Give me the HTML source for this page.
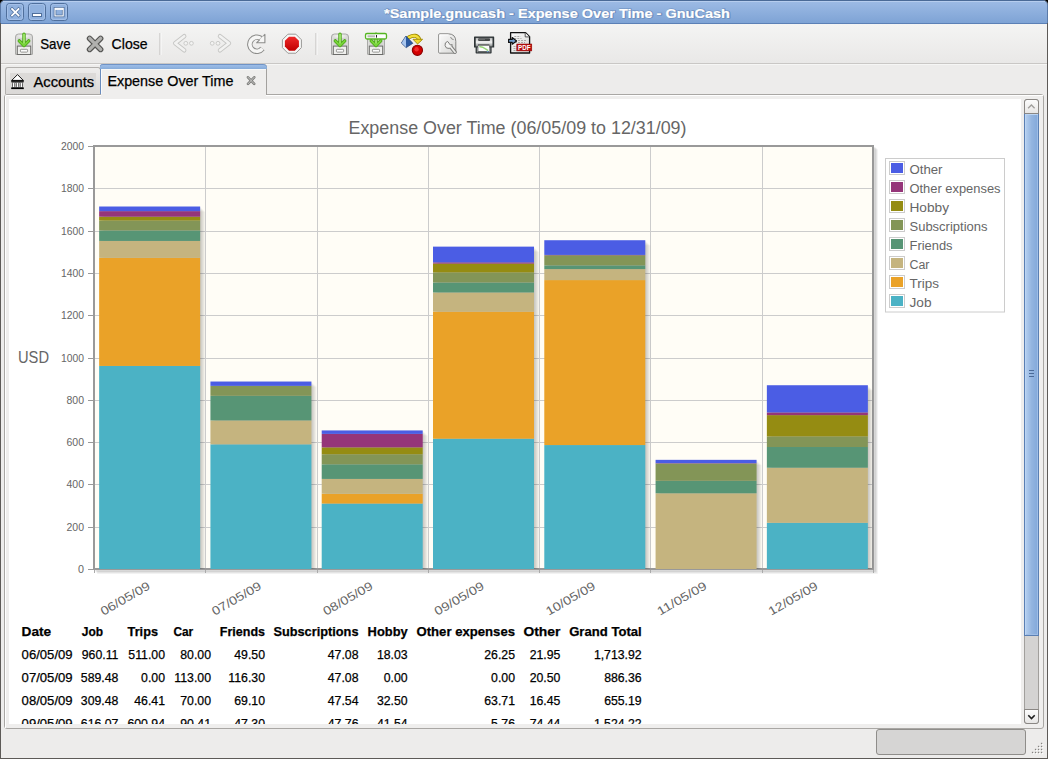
<!DOCTYPE html>
<html><head><meta charset="utf-8">
<style>
html,body{margin:0;padding:0;}
body{width:1048px;height:759px;position:relative;overflow:hidden;background:#edeceb;font-family:"Liberation Sans", sans-serif;}
.abs{position:absolute;}
svg text{font-family:"Liberation Sans", sans-serif;}
</style></head><body>
<div class="abs" style="left:0;top:0;width:1048px;height:24px;background:linear-gradient(#9dbbe5,#7ea3d5);border-top:1px solid #4a6a97;box-sizing:border-box;border-bottom:1px solid #5b80b6;border-left:1px solid #5a7aa8;border-right:1px solid #5a7aa8;border-radius:5px 5px 0 0;"></div>
<div class="abs" style="left:3px;top:1px;width:1042px;height:1px;background:#b6cdee;"></div>
<div class="abs" style="left:1px;top:24px;width:1046px;height:39px;background:linear-gradient(#f4f4f3,#e9e8e7);"></div>
<div class="abs" style="left:1px;top:63px;width:1046px;height:1px;background:#c9c7c5;"></div>
<div class="abs" style="left:1px;top:64px;width:1046px;height:1px;background:#f6f6f5;"></div>
<div class="abs" style="left:0;top:23px;width:1px;height:736px;background:#5d5a57;"></div>
<div class="abs" style="left:1047px;top:23px;width:1px;height:736px;background:#5d5a57;"></div>
<div class="abs" style="left:0;top:758px;width:1048px;height:1px;background:#5d5a57;"></div>
<div class="abs" style="left:4px;top:94px;width:1040px;height:635px;box-sizing:border-box;border:1px solid #a9a7a4;border-radius:3px;background:#efeeed;"></div>
<div class="abs" style="left:5px;top:95px;width:1038px;height:633px;box-sizing:border-box;border-top:1px solid #fff;border-left:1px solid #fff;border-radius:2px 0 0 0;"></div>
<div class="abs" style="left:9px;top:99px;width:1012px;height:625px;background:#fff;"></div>
<div class="abs" style="left:1024px;top:99px;width:15px;height:625px;background:#d4d3d2;box-sizing:border-box;border:1px solid #a19f9c;border-radius:3px;"></div>
<div class="abs" style="left:1024px;top:113px;width:15px;height:523px;background:linear-gradient(90deg,#b7d1f1,#94b5e0 50%,#82a8da);box-sizing:border-box;border:1px solid #5a7fb3;box-shadow:inset 1px 1px 0 #bcd5f3, inset -1px -1px 0 #9ebde6;"></div>
<div class="abs" style="left:1029px;top:370px;width:5px;height:1px;background:#4a6a98;box-shadow:0 3px 0 #4a6a98, 0 6px 0 #4a6a98;"></div>
<div class="abs" style="left:1024px;top:99px;width:15px;height:15px;background:linear-gradient(#fcfcfc,#e7e6e5);box-sizing:border-box;border:1px solid #8a8784;border-radius:3px 3px 0 0;"></div>
<div class="abs" style="left:1024px;top:709px;width:15px;height:15px;background:linear-gradient(#fcfcfc,#e7e6e5);box-sizing:border-box;border:1px solid #8a8784;border-radius:0 0 3px 3px;"></div>
<div class="abs" style="left:876px;top:729px;width:150px;height:26px;background:#d6d5d4;box-sizing:border-box;border:1px solid #8f8d8a;border-radius:3px;"></div>
<div class="abs" style="left:5px;top:67px;width:96px;height:27px;box-sizing:border-box;border:1px solid #b3b1ae;border-bottom:none;border-radius:3px 3px 0 0;background:linear-gradient(#eeedec,#dad8d6);"></div>
<div class="abs" style="left:10px;top:73px;width:86px;height:18px;background:#dcdad8;"></div>
<div class="abs" style="left:100px;top:64px;width:167px;height:30px;box-sizing:border-box;border-left:1px solid #6a8cbd;border-right:1px solid #a3a19e;border-radius:3px 4px 0 0;background:#efeeed;"></div><div class="abs" style="left:101px;top:69px;width:1px;height:25px;background:#fafafa;"></div><div class="abs" style="left:101px;top:94px;width:165px;height:5px;background:#efeeed;"></div><div class="abs" style="left:266px;top:94px;width:1px;height:1px;background:#a3a19e;"></div>
<div class="abs" style="left:100px;top:64px;width:167px;height:5px;background:linear-gradient(#9dbde8,#86abd9);border-radius:3px 4px 0 0;border-top:1px solid #6f93c6;box-sizing:border-box;"></div><div class="abs" style="left:101px;top:69px;width:165px;height:1px;background:#f8f8f7;"></div>
<svg class="abs" style="left:0;top:0" width="1048" height="759">
<defs>
<linearGradient id="cabG" x1="0" y1="0" x2="1" y2="0"><stop offset="0" stop-color="#d9d9d7"/><stop offset="0.5" stop-color="#f7f7f6"/><stop offset="1" stop-color="#d4d4d2"/></linearGradient>
<linearGradient id="redG" x1="0" y1="0" x2="0" y2="1"><stop offset="0" stop-color="#ef2929"/><stop offset="1" stop-color="#c00000"/></linearGradient>
<linearGradient id="prG" x1="0" y1="0" x2="0" y2="1"><stop offset="0" stop-color="#b4b6b6"/><stop offset="0.5" stop-color="#f4f4f4"/><stop offset="0.72" stop-color="#c6c8c8"/><stop offset="1" stop-color="#7e8282"/></linearGradient>
<linearGradient id="pageG" x1="0" y1="0" x2="1" y2="1"><stop offset="0" stop-color="#fbfbfb"/><stop offset="1" stop-color="#d8d8d6"/></linearGradient>
</defs>
<g transform="translate(15,33.5)">
<path d="M0.5,3.5 Q0.5,0.5 3.5,0.5 L14.5,0.5 Q17.5,0.5 17.5,3.5 L17.5,20.8 L0.5,20.8 Z" fill="url(#cabG)" stroke="#a9a9a7" stroke-width="1"/>
<rect x="2.3" y="4.2" width="13.4" height="8.2" fill="#d3d3d1"/>
<rect x="2.3" y="12.6" width="13.4" height="8.4" fill="#efefed" stroke="#6c6c6a" stroke-width="1"/>
<rect x="5.4" y="15.8" width="7.2" height="2.8" rx="0.8" fill="#fbfbfb" stroke="#8a8a88" stroke-width="0.9"/>
<path d="M9,0.6 L9,10 M4.3,7.4 L9,12 L13.7,7.4" fill="none" stroke="#48a514" stroke-width="3.4" stroke-linecap="round" stroke-linejoin="round"/>
<path d="M9,0.6 L9,10 M4.3,7.4 L9,12 L13.7,7.4" fill="none" stroke="#78d33a" stroke-width="1.9" stroke-linecap="round" stroke-linejoin="round"/>
<path d="M9,1 L9,9.5" fill="none" stroke="#d2f7b0" stroke-width="0.8" stroke-linecap="round"/>
</g>
<path d="M89.6,38.4 L100.6,49.4 M100.6,38.4 L89.6,49.4" stroke="#545452" stroke-width="5.6" stroke-linecap="round"/>
<path d="M89.6,38.4 L100.6,49.4 M100.6,38.4 L89.6,49.4" stroke="#b0b0ae" stroke-width="3.4" stroke-linecap="round"/>
<rect x="159.5" y="33" width="1" height="22" fill="#bdbbb9"/><rect x="160.5" y="33" width="1" height="22" fill="#fbfbfb"/>
<path d="M184.2,36.2 L175.2,43.2 L184.2,50.3" fill="none" stroke="#c6c6c4" stroke-width="4.4" stroke-linecap="round" stroke-linejoin="round"/>
<path d="M184.2,36.2 L175.2,43.2 L184.2,50.3" fill="none" stroke="#f2f2f1" stroke-width="2.6" stroke-linecap="round" stroke-linejoin="round"/>
<circle cx="185.8" cy="43.3" r="1.9" fill="#f3f3f2" stroke="#c6c6c4" stroke-width="0.9"/>
<circle cx="191.4" cy="43.3" r="1.9" fill="#f3f3f2" stroke="#c6c6c4" stroke-width="0.9"/>
<path d="M220.0,36.2 L229.0,43.2 L220.0,50.3" fill="none" stroke="#c6c6c4" stroke-width="4.4" stroke-linecap="round" stroke-linejoin="round"/>
<path d="M220.0,36.2 L229.0,43.2 L220.0,50.3" fill="none" stroke="#f2f2f1" stroke-width="2.6" stroke-linecap="round" stroke-linejoin="round"/>
<circle cx="212.2" cy="43.3" r="1.9" fill="#f3f3f2" stroke="#c6c6c4" stroke-width="0.9"/>
<circle cx="218.0" cy="43.3" r="1.9" fill="#f3f3f2" stroke="#c6c6c4" stroke-width="0.9"/>
<path d="M261.0,38.6 A7.0,7.0 0 1 0 262.4,48.6" fill="none" stroke="#8c8c8a" stroke-width="5.6" stroke-linecap="butt"/>
<path d="M261.0,38.6 A7.0,7.0 0 1 0 262.4,48.6" fill="none" stroke="#f6f6f5" stroke-width="3.6" stroke-linecap="butt"/>
<path d="M264.9,34.4 L264.9,42.8 L256.6,42.8 Z" fill="#f6f6f5" stroke="#8c8c8a" stroke-width="1.1" stroke-linejoin="round"/>
<path d="M259.5,39.6 L263.6,35.6 L263.6,41.6 Z" fill="#f6f6f5"/>
<polygon points="301.42,47.64 295.84,53.22 287.96,53.22 282.38,47.64 282.38,39.76 287.96,34.18 295.84,34.18 301.42,39.76" fill="#f7f7f6" stroke="#9a9a98" stroke-width="1"/>
<polygon points="298.92,46.61 294.81,50.72 288.99,50.72 284.88,46.61 284.88,40.79 288.99,36.68 294.81,36.68 298.92,40.79" fill="url(#redG)"/>
<rect x="315.5" y="33" width="1" height="22" fill="#bdbbb9"/><rect x="316.5" y="33" width="1" height="22" fill="#fbfbfb"/>
<g transform="translate(331,33.5)">
<path d="M0.5,3.5 Q0.5,0.5 3.5,0.5 L14.5,0.5 Q17.5,0.5 17.5,3.5 L17.5,20.8 L0.5,20.8 Z" fill="url(#cabG)" stroke="#a9a9a7" stroke-width="1"/>
<rect x="2.3" y="4.2" width="13.4" height="8.2" fill="#d3d3d1"/>
<rect x="2.3" y="12.6" width="13.4" height="8.4" fill="#efefed" stroke="#6c6c6a" stroke-width="1"/>
<rect x="5.4" y="15.8" width="7.2" height="2.8" rx="0.8" fill="#fbfbfb" stroke="#8a8a88" stroke-width="0.9"/>
<path d="M9,0.6 L9,10 M4.3,7.4 L9,12 L13.7,7.4" fill="none" stroke="#48a514" stroke-width="3.4" stroke-linecap="round" stroke-linejoin="round"/>
<path d="M9,0.6 L9,10 M4.3,7.4 L9,12 L13.7,7.4" fill="none" stroke="#78d33a" stroke-width="1.9" stroke-linecap="round" stroke-linejoin="round"/>
<path d="M9,1 L9,9.5" fill="none" stroke="#d2f7b0" stroke-width="0.8" stroke-linecap="round"/>
</g>
<g id="sa" transform="translate(367,33.5)">
<path d="M0.5,3.5 Q0.5,0.5 3.5,0.5 L14.5,0.5 Q17.5,0.5 17.5,3.5 L17.5,20.8 L0.5,20.8 Z" fill="url(#cabG)" stroke="#a9a9a7" stroke-width="1"/>
<rect x="2.3" y="4.2" width="13.4" height="8.2" fill="#d3d3d1"/>
<rect x="2.3" y="12.6" width="13.4" height="8.4" fill="#efefed" stroke="#6c6c6a" stroke-width="1"/>
<rect x="5.4" y="15.8" width="7.2" height="2.8" rx="0.8" fill="#fbfbfb" stroke="#8a8a88" stroke-width="0.9"/>
<path d="M9,0.6 L9,10 M4.3,7.4 L9,12 L13.7,7.4" fill="none" stroke="#48a514" stroke-width="3.4" stroke-linecap="round" stroke-linejoin="round"/>
<path d="M9,0.6 L9,10 M4.3,7.4 L9,12 L13.7,7.4" fill="none" stroke="#78d33a" stroke-width="1.9" stroke-linecap="round" stroke-linejoin="round"/>
<path d="M9,1 L9,9.5" fill="none" stroke="#d2f7b0" stroke-width="0.8" stroke-linecap="round"/>
</g>
<rect x="365.5" y="33.5" width="21" height="5.5" rx="1.5" fill="#fdfdfd" stroke="#55b522" stroke-width="1.3"/>
<rect x="367.5" y="35.3" width="7.5" height="2" fill="#b8b8b6"/><rect x="376" y="35" width="1" height="2.6" fill="#222"/>
<path d="M409.0,37.3 Q416.5,33.2 419.4,39.6" fill="none" stroke="#a08a00" stroke-width="4" stroke-linecap="round"/>
<path d="M409.0,37.3 Q416.5,33.2 419.4,39.6" fill="none" stroke="#f3df3a" stroke-width="2.4" stroke-linecap="round"/>
<path d="M413.0,39.3 L422.6,39.3 L417.6,44.0 Z" fill="#f0d830" stroke="#a08a00" stroke-width="0.9" stroke-linejoin="round"/>
<path d="M401.4,43.0 L405.9,36.0 L412.8,43.3 L406.2,47.6 Z" fill="#2c5aa0" stroke="#1f3f78" stroke-width="0.8" stroke-linejoin="round"/>
<path d="M401.6,43.0 L405.9,36.3 L406.1,47.2 Z" fill="#a9c6ee"/>
<circle cx="417.4" cy="50.3" r="5.1" fill="#d40000" stroke="#8a0000" stroke-width="1.1"/>
<circle cx="416.6" cy="49.3" r="2.2" fill="#ff4040" opacity="0.7"/>
<path d="M438.7,34.7 Q438.7,33.8 439.6,33.8 L448.6,33.8 Q455.8,34.2 455.8,41.4 L455.8,52.4 Q455.8,53.2 455.0,53.2 L439.6,53.2 Q438.7,53.2 438.7,52.4 Z" fill="url(#pageG)" stroke="#858583" stroke-width="1"/>
<path d="M439.8,52.2 L439.8,34.9 L448.4,34.9" fill="none" stroke="#ffffff" stroke-width="0.9"/>
<path d="M450.6,37.0 Q451.0,39.4 453.6,39.6" fill="none" stroke="#8a8a88" stroke-width="1.0"/>
<path d="M450.8,47.0 L455.0,52.2" fill="none" stroke="#7c7c7a" stroke-width="3.6" stroke-linecap="round"/>
<path d="M447.6,41.4 A3.6,3.6 0 1 0 452.2,44.6 L450.4,45.0 L449.0,43.2 Z" fill="#f4f4f3" stroke="#7c7c7a" stroke-width="1.0" stroke-linejoin="round"/>
<path d="M450.8,47.0 L455.0,52.2" fill="none" stroke="#ececea" stroke-width="1.8" stroke-linecap="round"/>
<path d="M474.6,36.4 L493.6,36.4 Q494.2,36.4 494.2,37.2 L494.2,47.6 L491.6,47.6 L491.6,52.8 Q491.6,53.6 490.8,53.6 L476.4,53.6 Q475.6,53.6 475.6,52.8 L475.6,47.6 L474.0,47.6 L474.0,37.2 Q474.0,36.4 474.6,36.4 Z" fill="#2e3436"/>
<rect x="475.7" y="37.9" width="16.8" height="8.6" fill="url(#prG)"/>
<rect x="478.2" y="38.2" width="11.8" height="2.8" rx="0.8" fill="#454849"/>
<circle cx="480.0" cy="39.6" r="0.55" fill="#9a9c9c"/><circle cx="482.0" cy="39.6" r="0.55" fill="#9a9c9c"/><circle cx="484.0" cy="39.6" r="0.55" fill="#9a9c9c"/>
<rect x="476.8" y="47.4" width="1.4" height="5.0" fill="#8d9091"/><rect x="489.0" y="47.4" width="1.4" height="5.0" fill="#8d9091"/>
<rect x="478.0" y="44.6" width="11.4" height="1.0" fill="#000"/>
<rect x="478.3" y="45.6" width="10.8" height="5.8" fill="#fbfbfb"/>
<path d="M479.3,46.5 L482.5,47.2 L485.5,48.8 L488.2,50.6" stroke="#8cd06a" stroke-width="1.4" fill="none" opacity="0.9"/>
<rect x="478.3" y="51.4" width="10.8" height="1.3" fill="#55595a"/><rect x="486.8" y="51.2" width="1.6" height="0.9" fill="#6fa8ee"/>
<path d="M510.6,32.6 L525.6,32.6 L529.6,36.6 L529.6,53.0 L510.6,53.0 Z" fill="url(#pageG)" stroke="#111" stroke-width="1.3" stroke-linejoin="round"/>
<path d="M525.2,32.8 L525.2,36.9 L529.4,36.9" fill="#f3f3f3" stroke="#444" stroke-width="0.9"/>
<line x1="514.3" y1="36.5" x2="520.5" y2="36.5" stroke="#9a9a98" stroke-width="0.8" stroke-dasharray="2,1"/>
<line x1="514.3" y1="38.5" x2="521.5" y2="38.5" stroke="#9a9a98" stroke-width="0.8" stroke-dasharray="2,1"/>
<line x1="515" y1="40.5" x2="526.5" y2="40.5" stroke="#9a9a98" stroke-width="0.8" stroke-dasharray="2,1"/>
<line x1="515" y1="42.5" x2="525.0" y2="42.5" stroke="#9a9a98" stroke-width="0.8" stroke-dasharray="2,1"/>
<line x1="513.5" y1="46.5" x2="517" y2="46.5" stroke="#9a9a98" stroke-width="0.8" stroke-dasharray="2,1"/>
<line x1="513.5" y1="48.5" x2="517" y2="48.5" stroke="#9a9a98" stroke-width="0.8" stroke-dasharray="2,1"/>
<line x1="513.5" y1="50.5" x2="517" y2="50.5" stroke="#9a9a98" stroke-width="0.8" stroke-dasharray="2,1"/>
<path d="M508.6,39.4 L512.2,39.4 L512.2,37.6 L516.6,40.9 L512.2,44.2 L512.2,42.4 L508.6,42.4 Z" fill="#729fcf" stroke="#111" stroke-width="1.2" stroke-linejoin="round"/>
<rect x="516.8" y="44.0" width="15.0" height="6.9" fill="#b80f0f" stroke="#8a0000" stroke-width="0.5"/>
<text x="524.3" y="50.2" font-size="7.2" font-weight="bold" fill="#fff" text-anchor="middle" textLength="12.4" lengthAdjust="spacingAndGlyphs">PDF</text>
<path d="M17.5,74.6 L23.3,80.4 L11.7,80.4 Z" fill="#fff" stroke="#000" stroke-width="0.9" stroke-linejoin="miter"/>
<rect x="11.2" y="80.4" width="12.6" height="1.4" fill="#000"/>
<path d="M11.9,82.3 L15.299999999999999,82.3 L14.7,83.3 L14.7,86.5 L15.299999999999999,87.5 L11.9,87.5 L12.5,86.5 L12.5,83.3 Z" fill="#fff" stroke="#000" stroke-width="0.6" stroke-linejoin="round"/>
<path d="M15.8,82.3 L19.2,82.3 L18.6,83.3 L18.6,86.5 L19.2,87.5 L15.8,87.5 L16.4,86.5 L16.4,83.3 Z" fill="#fff" stroke="#000" stroke-width="0.6" stroke-linejoin="round"/>
<path d="M19.7,82.3 L23.099999999999998,82.3 L22.5,83.3 L22.5,86.5 L23.099999999999998,87.5 L19.7,87.5 L20.299999999999997,86.5 L20.299999999999997,83.3 Z" fill="#fff" stroke="#000" stroke-width="0.6" stroke-linejoin="round"/>
<rect x="11.2" y="87.6" width="12.6" height="1.5" fill="#000"/>
<path d="M248,77.3 L254.2,83.8 M254.2,77.3 L248,83.8" stroke="#7c7c7a" stroke-width="2.6" stroke-linecap="round"/>
<path d="M248,77.3 L254.2,83.8 M254.2,77.3 L248,83.8" stroke="#c8c8c6" stroke-width="1.0" stroke-linecap="round"/>
<rect x="6.5" y="3.5" width="17" height="17" rx="3" fill="#90b1de" stroke="#4f6f9c" stroke-width="1"/>
<rect x="7.5" y="4.5" width="15" height="15" rx="2" fill="none" stroke="#a9c4ea" stroke-width="1" opacity="0.8"/>
<rect x="28.5" y="3.5" width="17" height="17" rx="3" fill="#90b1de" stroke="#4f6f9c" stroke-width="1"/>
<rect x="29.5" y="4.5" width="15" height="15" rx="2" fill="none" stroke="#a9c4ea" stroke-width="1" opacity="0.8"/>
<rect x="50.5" y="3.5" width="17" height="17" rx="3" fill="#90b1de" stroke="#4f6f9c" stroke-width="1"/>
<rect x="51.5" y="4.5" width="15" height="15" rx="2" fill="none" stroke="#a9c4ea" stroke-width="1" opacity="0.8"/>
<path d="M12.0,9.0 L18.5,15.4 M18.5,9.0 L12.0,15.4" stroke="#4f6f9c" stroke-width="3.2" stroke-linecap="square"/>
<path d="M12.0,9.0 L18.5,15.4 M18.5,9.0 L12.0,15.4" stroke="#fff" stroke-width="1.8" stroke-linecap="square"/>
<rect x="32.5" y="13.5" width="9" height="3" fill="#fff" stroke="#4f6f9c" stroke-width="1"/>
<rect x="55" y="8.3" width="8.2" height="7.6" fill="none" stroke="#4f6f9c" stroke-width="2.6"/>
<rect x="55" y="8.3" width="8.2" height="7.6" fill="none" stroke="#fff" stroke-width="1.1"/>
<rect x="55" y="8.3" width="8.2" height="1.6" fill="#fff"/>
<path d="M1028.1,108.2 L1031.4,105 L1034.6,108.2" fill="none" stroke="#a09e9b" stroke-width="1.3"/>
<path d="M1028.3,715.3 L1031.5,718.5 L1034.7,715.3" fill="none" stroke="#1e1e1e" stroke-width="1.6"/>
<rect x="1042.0" y="743.9" width="1.2" height="1.2" fill="#fff"/><rect x="1040.9" y="742.8" width="1.3" height="1.3" fill="#858380"/>
<rect x="1042.0" y="746.9" width="1.2" height="1.2" fill="#fff"/><rect x="1040.9" y="745.8" width="1.3" height="1.3" fill="#858380"/>
<rect x="1039.0" y="746.9" width="1.2" height="1.2" fill="#fff"/><rect x="1037.9" y="745.8" width="1.3" height="1.3" fill="#858380"/>
<rect x="1042.0" y="749.9" width="1.2" height="1.2" fill="#fff"/><rect x="1040.9" y="748.8" width="1.3" height="1.3" fill="#858380"/>
<rect x="1039.0" y="749.9" width="1.2" height="1.2" fill="#fff"/><rect x="1037.9" y="748.8" width="1.3" height="1.3" fill="#858380"/>
<rect x="1036.0" y="749.9" width="1.2" height="1.2" fill="#fff"/><rect x="1034.9" y="748.8" width="1.3" height="1.3" fill="#858380"/>
<rect x="1042.0" y="752.9" width="1.2" height="1.2" fill="#fff"/><rect x="1040.9" y="751.8" width="1.3" height="1.3" fill="#858380"/>
<rect x="1039.0" y="752.9" width="1.2" height="1.2" fill="#fff"/><rect x="1037.9" y="751.8" width="1.3" height="1.3" fill="#858380"/>
<rect x="1036.0" y="752.9" width="1.2" height="1.2" fill="#fff"/><rect x="1034.9" y="751.8" width="1.3" height="1.3" fill="#858380"/>
<rect x="1033.0" y="752.9" width="1.2" height="1.2" fill="#fff"/><rect x="1031.9" y="751.8" width="1.3" height="1.3" fill="#858380"/>
<text x="384.6" y="18.3" font-size="13.5" font-weight="bold" fill="#3f5f8f" textLength="346" lengthAdjust="spacingAndGlyphs" stroke="#3f5f8f" stroke-width="1.2" opacity="0.45">*Sample.gnucash - Expense Over Time - GnuCash</text>
<text x="384" y="17.7" font-size="13.5" font-weight="bold" fill="#fff" textLength="346" lengthAdjust="spacingAndGlyphs" stroke="#fff" stroke-width="0.2">*Sample.gnucash - Expense Over Time - GnuCash</text>
<text x="40.2" y="49" font-size="15" fill="#000" textLength="30.4" lengthAdjust="spacingAndGlyphs" stroke="#000" stroke-width="0.25">Save</text>
<text x="111.6" y="49" font-size="15" fill="#000" textLength="36" lengthAdjust="spacingAndGlyphs" stroke="#000" stroke-width="0.25">Close</text>
<text x="33.5" y="87" font-size="14.5" fill="#000" textLength="60.7" lengthAdjust="spacingAndGlyphs" stroke="#000" stroke-width="0.25">Accounts</text>
<text x="107.4" y="86" font-size="14.5" fill="#000" textLength="126" lengthAdjust="spacingAndGlyphs" stroke="#000" stroke-width="0.25">Expense Over Time</text>
<clipPath id="vclip"><rect x="9" y="99" width="1012" height="625"/></clipPath>
<g clip-path="url(#vclip)">
<text x="348.5" y="134" font-size="17.5" fill="#666" textLength="338" lengthAdjust="spacingAndGlyphs">Expense Over Time (06/05/09 to 12/31/09)</text>
<text x="18" y="362.5" font-size="16" fill="#666" textLength="31" lengthAdjust="spacingAndGlyphs">USD</text>
<path d="M95.06,570.06 L874.06,570.06 L874.06,147.06" fill="none" stroke="#000" stroke-opacity="0.07" stroke-width="3"/>
<path d="M96.12,571.12 L875.12,571.12 L875.12,148.12" fill="none" stroke="#000" stroke-opacity="0.07" stroke-width="3"/>
<path d="M97.18,572.18 L876.18,572.18 L876.18,149.18" fill="none" stroke="#000" stroke-opacity="0.07" stroke-width="3"/>
<rect x="94.0" y="146.0" width="779.0" height="423.0" fill="#fffdf6"/>
<line x1="94.0" y1="527.5" x2="873.0" y2="527.5" stroke="#cccccc" stroke-width="1"/>
<line x1="94.0" y1="484.5" x2="873.0" y2="484.5" stroke="#cccccc" stroke-width="1"/>
<line x1="94.0" y1="442.5" x2="873.0" y2="442.5" stroke="#cccccc" stroke-width="1"/>
<line x1="94.0" y1="400.5" x2="873.0" y2="400.5" stroke="#cccccc" stroke-width="1"/>
<line x1="94.0" y1="358.5" x2="873.0" y2="358.5" stroke="#cccccc" stroke-width="1"/>
<line x1="94.0" y1="315.5" x2="873.0" y2="315.5" stroke="#cccccc" stroke-width="1"/>
<line x1="94.0" y1="273.5" x2="873.0" y2="273.5" stroke="#cccccc" stroke-width="1"/>
<line x1="94.0" y1="231.5" x2="873.0" y2="231.5" stroke="#cccccc" stroke-width="1"/>
<line x1="94.0" y1="188.5" x2="873.0" y2="188.5" stroke="#cccccc" stroke-width="1"/>
<line x1="205.5" y1="146.0" x2="205.5" y2="569.0" stroke="#cccccc" stroke-width="1"/>
<line x1="317.5" y1="146.0" x2="317.5" y2="569.0" stroke="#cccccc" stroke-width="1"/>
<line x1="428.5" y1="146.0" x2="428.5" y2="569.0" stroke="#cccccc" stroke-width="1"/>
<line x1="539.5" y1="146.0" x2="539.5" y2="569.0" stroke="#cccccc" stroke-width="1"/>
<line x1="650.5" y1="146.0" x2="650.5" y2="569.0" stroke="#cccccc" stroke-width="1"/>
<line x1="762.5" y1="146.0" x2="762.5" y2="569.0" stroke="#cccccc" stroke-width="1"/>
<line x1="88" y1="569.5" x2="94.0" y2="569.5" stroke="#999" stroke-width="1"/>
<text x="84" y="572.7" font-size="10.5" fill="#666" text-anchor="end" textLength="6" lengthAdjust="spacingAndGlyphs">0</text>
<line x1="88" y1="527.5" x2="94.0" y2="527.5" stroke="#999" stroke-width="1"/>
<text x="84" y="530.7" font-size="10.5" fill="#666" text-anchor="end" textLength="17.5" lengthAdjust="spacingAndGlyphs">200</text>
<line x1="88" y1="484.5" x2="94.0" y2="484.5" stroke="#999" stroke-width="1"/>
<text x="84" y="487.7" font-size="10.5" fill="#666" text-anchor="end" textLength="17.5" lengthAdjust="spacingAndGlyphs">400</text>
<line x1="88" y1="442.5" x2="94.0" y2="442.5" stroke="#999" stroke-width="1"/>
<text x="84" y="445.7" font-size="10.5" fill="#666" text-anchor="end" textLength="17.5" lengthAdjust="spacingAndGlyphs">600</text>
<line x1="88" y1="400.5" x2="94.0" y2="400.5" stroke="#999" stroke-width="1"/>
<text x="84" y="403.7" font-size="10.5" fill="#666" text-anchor="end" textLength="17.5" lengthAdjust="spacingAndGlyphs">800</text>
<line x1="88" y1="358.5" x2="94.0" y2="358.5" stroke="#999" stroke-width="1"/>
<text x="84" y="361.7" font-size="10.5" fill="#666" text-anchor="end" textLength="23" lengthAdjust="spacingAndGlyphs">1000</text>
<line x1="88" y1="315.5" x2="94.0" y2="315.5" stroke="#999" stroke-width="1"/>
<text x="84" y="318.7" font-size="10.5" fill="#666" text-anchor="end" textLength="23" lengthAdjust="spacingAndGlyphs">1200</text>
<line x1="88" y1="273.5" x2="94.0" y2="273.5" stroke="#999" stroke-width="1"/>
<text x="84" y="276.7" font-size="10.5" fill="#666" text-anchor="end" textLength="23" lengthAdjust="spacingAndGlyphs">1400</text>
<line x1="88" y1="231.5" x2="94.0" y2="231.5" stroke="#999" stroke-width="1"/>
<text x="84" y="234.7" font-size="10.5" fill="#666" text-anchor="end" textLength="23" lengthAdjust="spacingAndGlyphs">1600</text>
<line x1="88" y1="188.5" x2="94.0" y2="188.5" stroke="#999" stroke-width="1"/>
<text x="84" y="191.7" font-size="10.5" fill="#666" text-anchor="end" textLength="23" lengthAdjust="spacingAndGlyphs">1800</text>
<line x1="88" y1="146.5" x2="94.0" y2="146.5" stroke="#999" stroke-width="1"/>
<text x="84" y="149.7" font-size="10.5" fill="#666" text-anchor="end" textLength="23" lengthAdjust="spacingAndGlyphs">2000</text>
<line x1="94.5" y1="569.0" x2="94.5" y2="573.0" stroke="#aaa" stroke-width="1"/>
<line x1="205.5" y1="569.0" x2="205.5" y2="573.0" stroke="#aaa" stroke-width="1"/>
<line x1="317.5" y1="569.0" x2="317.5" y2="573.0" stroke="#aaa" stroke-width="1"/>
<line x1="428.5" y1="569.0" x2="428.5" y2="573.0" stroke="#aaa" stroke-width="1"/>
<line x1="539.5" y1="569.0" x2="539.5" y2="573.0" stroke="#aaa" stroke-width="1"/>
<line x1="650.5" y1="569.0" x2="650.5" y2="573.0" stroke="#aaa" stroke-width="1"/>
<line x1="762.5" y1="569.0" x2="762.5" y2="573.0" stroke="#aaa" stroke-width="1"/>
<line x1="873.5" y1="569.0" x2="873.5" y2="573.0" stroke="#aaa" stroke-width="1"/>
<rect x="94.0" y="146.0" width="779.0" height="423.0" fill="none" stroke="#999999" stroke-width="2"/>
<clipPath id="gclip"><rect x="94.0" y="0" width="789.0" height="569.0"/></clipPath>
<g clip-path="url(#gclip)">
<rect x="100.14" y="207.51" width="101.0" height="362.49" fill="#000" fill-opacity="0.045"/>
<rect x="101.14" y="208.51" width="101.0" height="362.49" fill="#000" fill-opacity="0.045"/>
<rect x="102.14" y="209.51" width="101.0" height="362.49" fill="#000" fill-opacity="0.045"/>
<rect x="103.14" y="210.51" width="101.0" height="362.49" fill="#000" fill-opacity="0.045"/>
<rect x="104.14" y="211.51" width="101.0" height="362.49" fill="#000" fill-opacity="0.045"/>
<rect x="211.43" y="382.53" width="101.0" height="187.47" fill="#000" fill-opacity="0.045"/>
<rect x="212.43" y="383.53" width="101.0" height="187.47" fill="#000" fill-opacity="0.045"/>
<rect x="213.43" y="384.53" width="101.0" height="187.47" fill="#000" fill-opacity="0.045"/>
<rect x="214.43" y="385.53" width="101.0" height="187.47" fill="#000" fill-opacity="0.045"/>
<rect x="215.43" y="386.53" width="101.0" height="187.47" fill="#000" fill-opacity="0.045"/>
<rect x="322.71" y="431.43" width="101.0" height="138.57" fill="#000" fill-opacity="0.045"/>
<rect x="323.71" y="432.43" width="101.0" height="138.57" fill="#000" fill-opacity="0.045"/>
<rect x="324.71" y="433.43" width="101.0" height="138.57" fill="#000" fill-opacity="0.045"/>
<rect x="325.71" y="434.43" width="101.0" height="138.57" fill="#000" fill-opacity="0.045"/>
<rect x="326.71" y="435.43" width="101.0" height="138.57" fill="#000" fill-opacity="0.045"/>
<rect x="434.00" y="247.63" width="101.0" height="322.37" fill="#000" fill-opacity="0.045"/>
<rect x="435.00" y="248.63" width="101.0" height="322.37" fill="#000" fill-opacity="0.045"/>
<rect x="436.00" y="249.63" width="101.0" height="322.37" fill="#000" fill-opacity="0.045"/>
<rect x="437.00" y="250.63" width="101.0" height="322.37" fill="#000" fill-opacity="0.045"/>
<rect x="438.00" y="251.63" width="101.0" height="322.37" fill="#000" fill-opacity="0.045"/>
<rect x="545.29" y="241.22" width="101.0" height="328.78" fill="#000" fill-opacity="0.045"/>
<rect x="546.29" y="242.22" width="101.0" height="328.78" fill="#000" fill-opacity="0.045"/>
<rect x="547.29" y="243.22" width="101.0" height="328.78" fill="#000" fill-opacity="0.045"/>
<rect x="548.29" y="244.22" width="101.0" height="328.78" fill="#000" fill-opacity="0.045"/>
<rect x="549.29" y="245.22" width="101.0" height="328.78" fill="#000" fill-opacity="0.045"/>
<rect x="656.57" y="460.84" width="101.0" height="109.16" fill="#000" fill-opacity="0.045"/>
<rect x="657.57" y="461.84" width="101.0" height="109.16" fill="#000" fill-opacity="0.045"/>
<rect x="658.57" y="462.84" width="101.0" height="109.16" fill="#000" fill-opacity="0.045"/>
<rect x="659.57" y="463.84" width="101.0" height="109.16" fill="#000" fill-opacity="0.045"/>
<rect x="660.57" y="464.84" width="101.0" height="109.16" fill="#000" fill-opacity="0.045"/>
<rect x="767.86" y="386.23" width="101.0" height="183.77" fill="#000" fill-opacity="0.045"/>
<rect x="768.86" y="387.23" width="101.0" height="183.77" fill="#000" fill-opacity="0.045"/>
<rect x="769.86" y="388.23" width="101.0" height="183.77" fill="#000" fill-opacity="0.045"/>
<rect x="770.86" y="389.23" width="101.0" height="183.77" fill="#000" fill-opacity="0.045"/>
<rect x="771.86" y="390.23" width="101.0" height="183.77" fill="#000" fill-opacity="0.045"/>
</g>
<rect x="99.14" y="365.94" width="101.0" height="203.06" fill="#4bb2c5"/>
<rect x="99.14" y="257.86" width="101.0" height="108.08" fill="#EAA228"/>
<rect x="99.14" y="240.94" width="101.0" height="16.92" fill="#c5b47f"/>
<rect x="99.14" y="230.47" width="101.0" height="10.47" fill="#579575"/>
<rect x="99.14" y="220.51" width="101.0" height="9.96" fill="#839557"/>
<rect x="99.14" y="216.70" width="101.0" height="3.81" fill="#958c12"/>
<rect x="99.14" y="211.15" width="101.0" height="5.55" fill="#953579"/>
<rect x="99.14" y="206.51" width="101.0" height="4.64" fill="#4b5de4"/>
<rect x="210.43" y="444.32" width="101.0" height="124.68" fill="#4bb2c5"/>
<rect x="210.43" y="420.43" width="101.0" height="23.90" fill="#c5b47f"/>
<rect x="210.43" y="395.83" width="101.0" height="24.60" fill="#579575"/>
<rect x="210.43" y="385.87" width="101.0" height="9.96" fill="#839557"/>
<rect x="210.43" y="381.53" width="101.0" height="4.34" fill="#4b5de4"/>
<rect x="321.71" y="503.54" width="101.0" height="65.46" fill="#4bb2c5"/>
<rect x="321.71" y="493.73" width="101.0" height="9.82" fill="#EAA228"/>
<rect x="321.71" y="478.92" width="101.0" height="14.80" fill="#c5b47f"/>
<rect x="321.71" y="464.31" width="101.0" height="14.61" fill="#579575"/>
<rect x="321.71" y="454.25" width="101.0" height="10.05" fill="#839557"/>
<rect x="321.71" y="447.38" width="101.0" height="6.87" fill="#958c12"/>
<rect x="321.71" y="433.91" width="101.0" height="13.47" fill="#953579"/>
<rect x="321.71" y="430.43" width="101.0" height="3.48" fill="#4b5de4"/>
<rect x="433.00" y="438.70" width="101.0" height="130.30" fill="#4bb2c5"/>
<rect x="433.00" y="311.60" width="101.0" height="127.10" fill="#EAA228"/>
<rect x="433.00" y="292.48" width="101.0" height="19.12" fill="#c5b47f"/>
<rect x="433.00" y="282.48" width="101.0" height="10.00" fill="#579575"/>
<rect x="433.00" y="272.38" width="101.0" height="10.10" fill="#839557"/>
<rect x="433.00" y="263.59" width="101.0" height="8.79" fill="#958c12"/>
<rect x="433.00" y="262.37" width="101.0" height="1.22" fill="#953579"/>
<rect x="433.00" y="246.63" width="101.0" height="15.74" fill="#4b5de4"/>
<rect x="544.29" y="445.06" width="101.0" height="123.94" fill="#4bb2c5"/>
<rect x="544.29" y="280.09" width="101.0" height="164.97" fill="#EAA228"/>
<rect x="544.29" y="269.09" width="101.0" height="11.00" fill="#c5b47f"/>
<rect x="544.29" y="265.39" width="101.0" height="3.70" fill="#579575"/>
<rect x="544.29" y="255.24" width="101.0" height="10.15" fill="#839557"/>
<rect x="544.29" y="254.92" width="101.0" height="0.32" fill="#953579"/>
<rect x="544.29" y="240.22" width="101.0" height="14.70" fill="#4b5de4"/>
<rect x="655.57" y="493.28" width="101.0" height="75.72" fill="#c5b47f"/>
<rect x="655.57" y="480.80" width="101.0" height="12.48" fill="#579575"/>
<rect x="655.57" y="463.46" width="101.0" height="17.34" fill="#839557"/>
<rect x="655.57" y="463.14" width="101.0" height="0.32" fill="#953579"/>
<rect x="655.57" y="459.84" width="101.0" height="3.30" fill="#4b5de4"/>
<rect x="766.86" y="522.81" width="101.0" height="46.19" fill="#4bb2c5"/>
<rect x="766.86" y="467.71" width="101.0" height="55.10" fill="#c5b47f"/>
<rect x="766.86" y="447.01" width="101.0" height="20.71" fill="#579575"/>
<rect x="766.86" y="436.43" width="101.0" height="10.57" fill="#839557"/>
<rect x="766.86" y="415.13" width="101.0" height="21.30" fill="#958c12"/>
<rect x="766.86" y="412.43" width="101.0" height="2.71" fill="#953579"/>
<rect x="766.86" y="385.23" width="101.0" height="27.20" fill="#4b5de4"/>
<g transform="translate(147.1,581.4) rotate(-30)"><text x="0" y="8" font-size="12" fill="#666" text-anchor="end" textLength="55" lengthAdjust="spacingAndGlyphs">06/05/09</text></g>
<g transform="translate(258.4,581.4) rotate(-30)"><text x="0" y="8" font-size="12" fill="#666" text-anchor="end" textLength="55" lengthAdjust="spacingAndGlyphs">07/05/09</text></g>
<g transform="translate(369.7,581.4) rotate(-30)"><text x="0" y="8" font-size="12" fill="#666" text-anchor="end" textLength="55" lengthAdjust="spacingAndGlyphs">08/05/09</text></g>
<g transform="translate(481.0,581.4) rotate(-30)"><text x="0" y="8" font-size="12" fill="#666" text-anchor="end" textLength="55" lengthAdjust="spacingAndGlyphs">09/05/09</text></g>
<g transform="translate(592.3,581.4) rotate(-30)"><text x="0" y="8" font-size="12" fill="#666" text-anchor="end" textLength="55" lengthAdjust="spacingAndGlyphs">10/05/09</text></g>
<g transform="translate(703.6,581.4) rotate(-30)"><text x="0" y="8" font-size="12" fill="#666" text-anchor="end" textLength="55" lengthAdjust="spacingAndGlyphs">11/05/09</text></g>
<g transform="translate(814.9,581.4) rotate(-30)"><text x="0" y="8" font-size="12" fill="#666" text-anchor="end" textLength="55" lengthAdjust="spacingAndGlyphs">12/05/09</text></g>
<rect x="885.5" y="158.5" width="119" height="153.5" fill="#fff" stroke="#cccccc" stroke-width="1"/>
<rect x="889.5" y="161.5" width="15" height="13" fill="none" stroke="#cccccc" stroke-width="1"/>
<rect x="891" y="163.0" width="12" height="10" fill="#4b5de4"/>
<text x="909.5" y="173.5" font-size="12.5" fill="#666" textLength="33" lengthAdjust="spacingAndGlyphs">Other</text>
<rect x="889.5" y="180.5" width="15" height="13" fill="none" stroke="#cccccc" stroke-width="1"/>
<rect x="891" y="182.0" width="12" height="10" fill="#953579"/>
<text x="909.5" y="192.5" font-size="12.5" fill="#666" textLength="91" lengthAdjust="spacingAndGlyphs">Other expenses</text>
<rect x="889.5" y="199.5" width="15" height="13" fill="none" stroke="#cccccc" stroke-width="1"/>
<rect x="891" y="201.0" width="12" height="10" fill="#958c12"/>
<text x="909.5" y="211.5" font-size="12.5" fill="#666" textLength="39.5" lengthAdjust="spacingAndGlyphs">Hobby</text>
<rect x="889.5" y="218.5" width="15" height="13" fill="none" stroke="#cccccc" stroke-width="1"/>
<rect x="891" y="220.0" width="12" height="10" fill="#839557"/>
<text x="909.5" y="230.5" font-size="12.5" fill="#666" textLength="78" lengthAdjust="spacingAndGlyphs">Subscriptions</text>
<rect x="889.5" y="237.5" width="15" height="13" fill="none" stroke="#cccccc" stroke-width="1"/>
<rect x="891" y="239.0" width="12" height="10" fill="#579575"/>
<text x="909.5" y="249.5" font-size="12.5" fill="#666" textLength="43" lengthAdjust="spacingAndGlyphs">Friends</text>
<rect x="889.5" y="256.5" width="15" height="13" fill="none" stroke="#cccccc" stroke-width="1"/>
<rect x="891" y="258.0" width="12" height="10" fill="#c5b47f"/>
<text x="909.5" y="268.5" font-size="12.5" fill="#666" textLength="20" lengthAdjust="spacingAndGlyphs">Car</text>
<rect x="889.5" y="275.5" width="15" height="13" fill="none" stroke="#cccccc" stroke-width="1"/>
<rect x="891" y="277.0" width="12" height="10" fill="#EAA228"/>
<text x="909.5" y="287.5" font-size="12.5" fill="#666" textLength="29.5" lengthAdjust="spacingAndGlyphs">Trips</text>
<rect x="889.5" y="294.5" width="15" height="13" fill="none" stroke="#cccccc" stroke-width="1"/>
<rect x="891" y="296.0" width="12" height="10" fill="#4bb2c5"/>
<text x="909.5" y="306.5" font-size="12.5" fill="#666" textLength="22" lengthAdjust="spacingAndGlyphs">Job</text>
<text x="21.6" y="636" font-size="13" font-weight="bold" fill="#000" textLength="29.6" lengthAdjust="spacingAndGlyphs" stroke="#000" stroke-width="0.25">Date</text>
<text x="81.8" y="636" font-size="13" font-weight="bold" fill="#000" textLength="21.3" lengthAdjust="spacingAndGlyphs" stroke="#000" stroke-width="0.25">Job</text>
<text x="127.6" y="636" font-size="13" font-weight="bold" fill="#000" textLength="30.4" lengthAdjust="spacingAndGlyphs" stroke="#000" stroke-width="0.25">Trips</text>
<text x="173.4" y="636" font-size="13" font-weight="bold" fill="#000" textLength="19.8" lengthAdjust="spacingAndGlyphs" stroke="#000" stroke-width="0.25">Car</text>
<text x="219.8" y="636" font-size="13" font-weight="bold" fill="#000" textLength="45.2" lengthAdjust="spacingAndGlyphs" stroke="#000" stroke-width="0.25">Friends</text>
<text x="273.4" y="636" font-size="13" font-weight="bold" fill="#000" textLength="85.1" lengthAdjust="spacingAndGlyphs" stroke="#000" stroke-width="0.25">Subscriptions</text>
<text x="367.6" y="636" font-size="13" font-weight="bold" fill="#000" textLength="40.1" lengthAdjust="spacingAndGlyphs" stroke="#000" stroke-width="0.25">Hobby</text>
<text x="416.5" y="636" font-size="13" font-weight="bold" fill="#000" textLength="98.5" lengthAdjust="spacingAndGlyphs" stroke="#000" stroke-width="0.25">Other expenses</text>
<text x="523.4" y="636" font-size="13" font-weight="bold" fill="#000" textLength="37" lengthAdjust="spacingAndGlyphs" stroke="#000" stroke-width="0.25">Other</text>
<text x="569.2" y="636" font-size="13" font-weight="bold" fill="#000" textLength="72.5" lengthAdjust="spacingAndGlyphs" stroke="#000" stroke-width="0.25">Grand Total</text>
<text x="21.6" y="659.3" font-size="13" fill="#000" textLength="51" lengthAdjust="spacingAndGlyphs" stroke="#000" stroke-width="0.25">06/05/09</text>
<text x="118.4" y="659.3" font-size="13" fill="#000" text-anchor="end" textLength="36.66" lengthAdjust="spacingAndGlyphs" stroke="#000" stroke-width="0.25">960.11</text>
<text x="165" y="659.3" font-size="13" fill="#000" text-anchor="end" textLength="36.66" lengthAdjust="spacingAndGlyphs" stroke="#000" stroke-width="0.25">511.00</text>
<text x="211" y="659.3" font-size="13" fill="#000" text-anchor="end" textLength="30.74" lengthAdjust="spacingAndGlyphs" stroke="#000" stroke-width="0.25">80.00</text>
<text x="265" y="659.3" font-size="13" fill="#000" text-anchor="end" textLength="30.74" lengthAdjust="spacingAndGlyphs" stroke="#000" stroke-width="0.25">49.50</text>
<text x="358.5" y="659.3" font-size="13" fill="#000" text-anchor="end" textLength="30.74" lengthAdjust="spacingAndGlyphs" stroke="#000" stroke-width="0.25">47.08</text>
<text x="407.7" y="659.3" font-size="13" fill="#000" text-anchor="end" textLength="30.74" lengthAdjust="spacingAndGlyphs" stroke="#000" stroke-width="0.25">18.03</text>
<text x="515" y="659.3" font-size="13" fill="#000" text-anchor="end" textLength="30.74" lengthAdjust="spacingAndGlyphs" stroke="#000" stroke-width="0.25">26.25</text>
<text x="560.4" y="659.3" font-size="13" fill="#000" text-anchor="end" textLength="30.74" lengthAdjust="spacingAndGlyphs" stroke="#000" stroke-width="0.25">21.95</text>
<text x="641.7" y="659.3" font-size="13" fill="#000" text-anchor="end" textLength="47.82" lengthAdjust="spacingAndGlyphs" stroke="#000" stroke-width="0.25">1,713.92</text>
<text x="21.6" y="682.3" font-size="13" fill="#000" textLength="51" lengthAdjust="spacingAndGlyphs" stroke="#000" stroke-width="0.25">07/05/09</text>
<text x="118.4" y="682.3" font-size="13" fill="#000" text-anchor="end" textLength="37.57" lengthAdjust="spacingAndGlyphs" stroke="#000" stroke-width="0.25">589.48</text>
<text x="165" y="682.3" font-size="13" fill="#000" text-anchor="end" textLength="23.91" lengthAdjust="spacingAndGlyphs" stroke="#000" stroke-width="0.25">0.00</text>
<text x="211" y="682.3" font-size="13" fill="#000" text-anchor="end" textLength="36.66" lengthAdjust="spacingAndGlyphs" stroke="#000" stroke-width="0.25">113.00</text>
<text x="265" y="682.3" font-size="13" fill="#000" text-anchor="end" textLength="36.66" lengthAdjust="spacingAndGlyphs" stroke="#000" stroke-width="0.25">116.30</text>
<text x="358.5" y="682.3" font-size="13" fill="#000" text-anchor="end" textLength="30.74" lengthAdjust="spacingAndGlyphs" stroke="#000" stroke-width="0.25">47.08</text>
<text x="407.7" y="682.3" font-size="13" fill="#000" text-anchor="end" textLength="23.91" lengthAdjust="spacingAndGlyphs" stroke="#000" stroke-width="0.25">0.00</text>
<text x="515" y="682.3" font-size="13" fill="#000" text-anchor="end" textLength="23.91" lengthAdjust="spacingAndGlyphs" stroke="#000" stroke-width="0.25">0.00</text>
<text x="560.4" y="682.3" font-size="13" fill="#000" text-anchor="end" textLength="30.74" lengthAdjust="spacingAndGlyphs" stroke="#000" stroke-width="0.25">20.50</text>
<text x="641.7" y="682.3" font-size="13" fill="#000" text-anchor="end" textLength="37.57" lengthAdjust="spacingAndGlyphs" stroke="#000" stroke-width="0.25">886.36</text>
<text x="21.6" y="705.3" font-size="13" fill="#000" textLength="51" lengthAdjust="spacingAndGlyphs" stroke="#000" stroke-width="0.25">08/05/09</text>
<text x="118.4" y="705.3" font-size="13" fill="#000" text-anchor="end" textLength="37.57" lengthAdjust="spacingAndGlyphs" stroke="#000" stroke-width="0.25">309.48</text>
<text x="165" y="705.3" font-size="13" fill="#000" text-anchor="end" textLength="30.74" lengthAdjust="spacingAndGlyphs" stroke="#000" stroke-width="0.25">46.41</text>
<text x="211" y="705.3" font-size="13" fill="#000" text-anchor="end" textLength="30.74" lengthAdjust="spacingAndGlyphs" stroke="#000" stroke-width="0.25">70.00</text>
<text x="265" y="705.3" font-size="13" fill="#000" text-anchor="end" textLength="30.74" lengthAdjust="spacingAndGlyphs" stroke="#000" stroke-width="0.25">69.10</text>
<text x="358.5" y="705.3" font-size="13" fill="#000" text-anchor="end" textLength="30.74" lengthAdjust="spacingAndGlyphs" stroke="#000" stroke-width="0.25">47.54</text>
<text x="407.7" y="705.3" font-size="13" fill="#000" text-anchor="end" textLength="30.74" lengthAdjust="spacingAndGlyphs" stroke="#000" stroke-width="0.25">32.50</text>
<text x="515" y="705.3" font-size="13" fill="#000" text-anchor="end" textLength="30.74" lengthAdjust="spacingAndGlyphs" stroke="#000" stroke-width="0.25">63.71</text>
<text x="560.4" y="705.3" font-size="13" fill="#000" text-anchor="end" textLength="30.74" lengthAdjust="spacingAndGlyphs" stroke="#000" stroke-width="0.25">16.45</text>
<text x="641.7" y="705.3" font-size="13" fill="#000" text-anchor="end" textLength="37.57" lengthAdjust="spacingAndGlyphs" stroke="#000" stroke-width="0.25">655.19</text>
<text x="21.6" y="728.3" font-size="13" fill="#000" textLength="51" lengthAdjust="spacingAndGlyphs" stroke="#000" stroke-width="0.25">09/05/09</text>
<text x="118.4" y="728.3" font-size="13" fill="#000" text-anchor="end" textLength="37.57" lengthAdjust="spacingAndGlyphs" stroke="#000" stroke-width="0.25">616.07</text>
<text x="165" y="728.3" font-size="13" fill="#000" text-anchor="end" textLength="37.57" lengthAdjust="spacingAndGlyphs" stroke="#000" stroke-width="0.25">600.94</text>
<text x="211" y="728.3" font-size="13" fill="#000" text-anchor="end" textLength="30.74" lengthAdjust="spacingAndGlyphs" stroke="#000" stroke-width="0.25">90.41</text>
<text x="265" y="728.3" font-size="13" fill="#000" text-anchor="end" textLength="30.74" lengthAdjust="spacingAndGlyphs" stroke="#000" stroke-width="0.25">47.30</text>
<text x="358.5" y="728.3" font-size="13" fill="#000" text-anchor="end" textLength="30.74" lengthAdjust="spacingAndGlyphs" stroke="#000" stroke-width="0.25">47.76</text>
<text x="407.7" y="728.3" font-size="13" fill="#000" text-anchor="end" textLength="30.74" lengthAdjust="spacingAndGlyphs" stroke="#000" stroke-width="0.25">41.54</text>
<text x="515" y="728.3" font-size="13" fill="#000" text-anchor="end" textLength="23.91" lengthAdjust="spacingAndGlyphs" stroke="#000" stroke-width="0.25">5.76</text>
<text x="560.4" y="728.3" font-size="13" fill="#000" text-anchor="end" textLength="30.74" lengthAdjust="spacingAndGlyphs" stroke="#000" stroke-width="0.25">74.44</text>
<text x="641.7" y="728.3" font-size="13" fill="#000" text-anchor="end" textLength="47.82" lengthAdjust="spacingAndGlyphs" stroke="#000" stroke-width="0.25">1,524.22</text>
</g>
<path d="M0,0 L5,0 A5,5 0 0 0 0,5 Z" fill="#000"/><path d="M1048,0 L1043,0 A5,5 0 0 1 1048,5 Z" fill="#000"/>
</svg>
</body></html>
